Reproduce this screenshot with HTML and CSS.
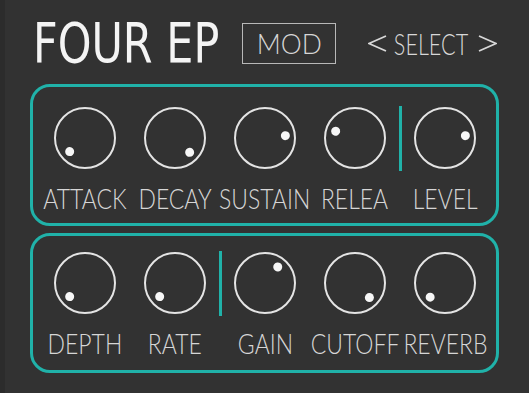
FILE: index.html
```html
<!DOCTYPE html>
<html>
<head>
<meta charset="utf-8">
<link rel="stylesheet" href="styles.css">
</head>
<body>
<div class="app">
  <header class="top">
    <h1 class="title">FOUR EP</h1>
    <div class="mod"><span class="mod-text">MOD</span></div>
    <div class="select">
      <svg class="chev" width="19" height="17" viewBox="0 0 19 17"><polyline points="18,1 1,8.5 18,16" fill="none" stroke="#d8d8d8" stroke-width="1.8"/></svg>
      <span class="select-text">SELECT</span>
      <svg class="chev" width="19" height="17" viewBox="0 0 19 17"><polyline points="1,1 18,8.5 1,16" fill="none" stroke="#d8d8d8" stroke-width="1.8"/></svg>
    </div>
  </header>

  <section class="panel panel-a">
    <div class="cell"><div class="knob"><div class="hand" style="--a:227deg"></div></div><div class="label">ATTACK</div></div>
    <div class="cell"><div class="knob"><div class="hand" style="--a:133deg"></div></div><div class="label">DECAY</div></div>
    <div class="cell"><div class="knob"><div class="hand" style="--a:82deg"></div></div><div class="label">SUSTAIN</div></div>
    <div class="cell"><div class="knob"><div class="hand" style="--a:288deg"></div></div><div class="label">RELEA</div></div>
    <div class="sep"></div>
    <div class="cell"><div class="knob"><div class="hand" style="--a:82deg"></div></div><div class="label">LEVEL</div></div>
  </section>

  <section class="panel panel-b">
    <div class="cell"><div class="knob"><div class="hand" style="--a:227deg"></div></div><div class="label">DEPTH</div></div>
    <div class="cell"><div class="knob"><div class="hand" style="--a:227deg"></div></div><div class="label">RATE</div></div>
    <div class="sep"></div>
    <div class="cell"><div class="knob"><div class="hand" style="--a:37deg"></div></div><div class="label">GAIN</div></div>
    <div class="cell"><div class="knob"><div class="hand" style="--a:134deg"></div></div><div class="label">CUTOFF</div></div>
    <div class="cell"><div class="knob"><div class="hand" style="--a:225deg"></div></div><div class="label">REVERB</div></div>
  </section>
</div>
</body>
</html>
```

FILE: styles.css
```css
* { box-sizing: border-box; }

html, body {
  margin: 0;
  padding: 0;
  background: #323232;
}

body {
  width: 529px;
  height: 393px;
  overflow: hidden;
  font-family: "Lato", "DejaVu Sans", sans-serif;
}

.app {
  width: 529px;
  height: 393px;
  border-left: 5px solid #2c2c2c;
  padding-left: 25px;
}

.top {
  height: 84px;
  display: flex;
  align-items: center;
  padding-top: 2px;
}

.title {
  margin: 0 0 0 3px;
  width: 190px;
  font-family: "DejaVu Sans", sans-serif;
  font-weight: 400;
  font-size: 55px;
  line-height: 55px;
  color: #f4f4f4;
  white-space: nowrap;
  transform: scaleX(0.78);
  transform-origin: left center;
}

.mod {
  margin-left: 19px;
  width: 94px;
  height: 41px;
  border: 1.5px solid #b8b8b8;
  display: flex;
  align-items: center;
  justify-content: center;
}

.mod-text {
  font-weight: 300;
  font-size: 27px;
  line-height: 27px;
  color: #d6d6d6;
  display: inline-block;
  transform: scaleX(0.98);
}

.select {
  margin-left: 32px;
  display: flex;
  align-items: center;
}

.chev {
  display: block;
}

.select-text {
  width: 72px;
  margin: 0 11px 0 8px;
  display: flex;
  justify-content: center;
  white-space: nowrap;
  font-weight: 300;
  font-size: 30px;
  line-height: 30px;
  color: #d8d8d8;
  transform: scaleX(0.72);
}

.panel {
  width: 469px;
  border: 3px solid #20b2a9;
  border-radius: 20px;
  display: flex;
  align-items: flex-start;
  padding-left: 7px;
}

.panel-a {
  height: 142px;
  padding-top: 20px;
}

.panel-b {
  margin-top: 7px;
  height: 140px;
  padding-top: 15.5px;
}

.cell {
  width: 90px;
  display: flex;
  flex-direction: column;
  align-items: center;
}

.knob {
  position: relative;
  width: 62px;
  height: 62px;
  border: 2.5px solid #e4e4e4;
  border-radius: 50%;
}

.hand {
  position: absolute;
  inset: 0;
  transform: rotate(var(--a));
}

.hand::after {
  content: "";
  position: absolute;
  left: 50%;
  top: 4px;
  width: 9px;
  height: 9px;
  margin-left: -4.5px;
  border-radius: 50%;
  background: #f6f6f6;
}

.label {
  margin-top: 16px;
  font-weight: 300;
  font-size: 27px;
  line-height: 27px;
  color: #d6d6d6;
  white-space: nowrap;
  transform: scaleX(0.85);
}

.sep {
  width: 3px;
  height: 65px;
  margin: -1px -1.5px 0 -1.5px;
  background: #20b2a9;
}
```
